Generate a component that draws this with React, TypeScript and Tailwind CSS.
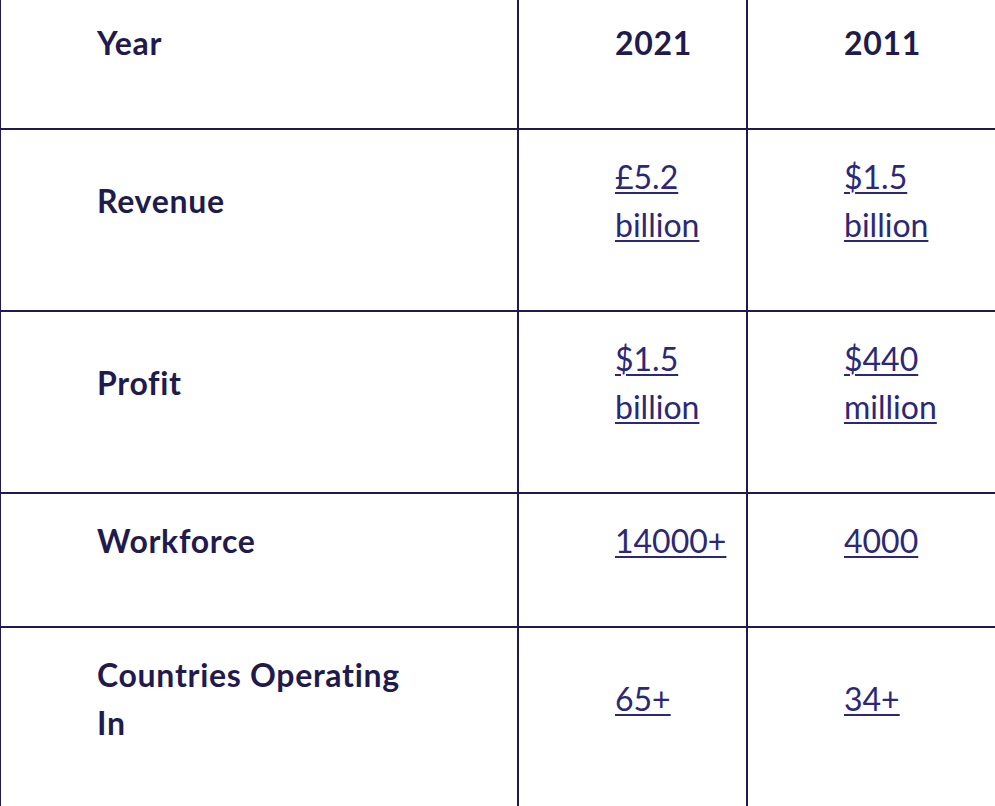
import React from 'react';

interface Row {
  label: string;
  y2021: string;
  y2011: string;
}

const rows: Row[] = [
  { label: 'Revenue', y2021: '£5.2 billion', y2011: '$1.5 billion' },
  { label: 'Profit', y2021: '$1.5 billion', y2011: '$440 million' },
  { label: 'Workforce', y2021: '14000+', y2011: '4000' },
  { label: 'Countries Operating In', y2021: '65+', y2011: '34+' },
];

const cell = 'border-2 border-[#1f1b4d] align-middle pt-[23px] pb-[61px] pl-24 text-left';
const link = 'underline decoration-2 underline-offset-[3px] text-[#2b2878]';

export default function App() {
  return (
    <div className="w-[995px] h-[806px] overflow-hidden bg-white">
      <table
        className="border-collapse table-fixed w-[1006px] mt-[-4px] ml-[-1px] text-[32px] leading-[48px] text-[#1f1b4d]"
        style={{ fontFamily: 'Lato, "Liberation Sans", sans-serif' }}
      >
        <colgroup>
          <col className="w-[518px]" />
          <col className="w-[229px]" />
          <col className="w-[259px]" />
        </colgroup>
        <thead>
          <tr>
            <th className={`${cell} pr-[100px] font-bold tracking-[0.7px] border-t-0`}>Year</th>
            <th className={`${cell} pr-2 font-bold tracking-[0.7px] border-t-0`}>2021</th>
            <th className={`${cell} pr-8 font-bold tracking-[0.7px] border-t-0`}>2011</th>
          </tr>
        </thead>
        <tbody>
          {rows.map((row) => (
            <tr key={row.label}>
              <th className={`${cell} pr-[100px] font-bold tracking-[0.7px]`}>{row.label}</th>
              <td className={`${cell} pr-2`}>
                <a href="#" className={link}>{row.y2021}</a>
              </td>
              <td className={`${cell} pr-8`}>
                <a href="#" className={link}>{row.y2011}</a>
              </td>
            </tr>
          ))}
        </tbody>
      </table>
    </div>
  );
}
